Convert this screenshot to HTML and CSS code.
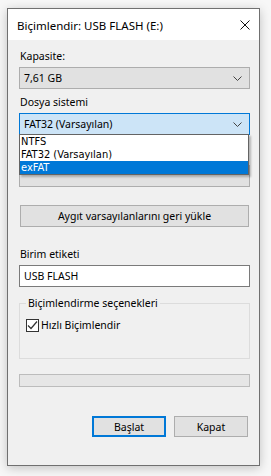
FILE: index.html
```html
<!DOCTYPE html>
<html lang="tr">
<head>
<meta charset="utf-8">
<title>Biçimlendir</title>
<link rel="stylesheet" href="styles.css">
</head>
<body>
<div class="window">
  <div class="titlebar">
    <span class="title">Biçimlendir: USB FLASH (E:)</span>
    <svg class="close" width="10" height="10" viewBox="0 0 10 10"><path d="M0.5 0.5 L9.5 9.5 M9.5 0.5 L0.5 9.5" stroke="#111" stroke-width="1"/></svg>
  </div>
  <div class="content">
    <div class="label first">Kapasite:</div>
    <div class="combo"><span>7,61 GB</span><svg class="chev" width="9" height="5" viewBox="0 0 9 5"><path d="M0.5 0.5 L4.5 4.5 L8.5 0.5" fill="none" stroke="#444" stroke-width="1"/></svg></div>
    <div class="label">Dosya sistemi</div>
    <div class="combo focused"><span>FAT32 (Varsayılan)</span><svg class="chev" width="9" height="5" viewBox="0 0 9 5"><path d="M0.5 0.5 L4.5 4.5 L8.5 0.5" fill="none" stroke="#444" stroke-width="1"/></svg>
      <ul class="list">
        <li>NTFS</li>
        <li>FAT32 (Varsayılan)</li>
        <li class="sel">exFAT</li>
      </ul>
    </div>
    <div class="combo hidden-combo"></div>
    <button class="restore">Aygıt varsayılanlarını geri yükle</button>
    <div class="label vol">Birim etiketi</div>
    <div class="input">USB FLASH</div>
    <fieldset class="group">
      <legend>Biçimlendirme seçenekleri</legend>
      <label class="check"><span class="box"><svg width="11" height="11" viewBox="0 0 11 11"><path d="M1 5.5 L4 8.5 L10 1.5" fill="none" stroke="#333" stroke-width="1.2"/></svg></span>Hızlı Biçimlendir</label>
    </fieldset>
    <div class="progress"></div>
    <div class="buttons">
      <button class="btn primary">Başlat</button>
      <button class="btn">Kapat</button>
    </div>
  </div>
</div>
</body>
</html>
```

FILE: styles.css
```css
html, body {
  margin: 0;
  padding: 0;
}
body {
  background: #f7f7f7;
  font-family: "Noto Sans", Lato, sans-serif;
  font-size: 10.5px;
  color: #000;
  width: 271px;
  height: 476px;
  overflow: hidden;
}
.window {
  margin: 8px 0 0 7px;
  width: 253px;
  height: 458px;
  box-sizing: border-box;
  border: 1px solid #707070;
  background: #f0f0f0;
  box-shadow: 0 2px 10px rgba(0,0,0,0.22);
  display: flex;
  flex-direction: column;
}
.titlebar {
  height: 31px;
  background: #fff;
  display: flex;
  align-items: center;
  padding: 0 9px 0 9px;
  flex: none;
}
.title {
  flex: 1;
  font-size: 11.5px;
  line-height: 31px;
  padding-top: 1px;
}
.close {
  display: block;
  margin-top: 1px;
}
.content {
  padding: 0 9px 0 11px;
  display: flex;
  flex-direction: column;
}
.label {
  line-height: 15px;
  height: 15px;
  margin-top: 6px;
  margin-bottom: 3px;
  padding-left: 1px;
}
.label.first {
  margin-top: 9px;
}
.combo {
  position: relative;
  height: 22px;
  box-sizing: border-box;
  border: 1px solid #adadad;
  background: #e1e1e1;
  display: flex;
  align-items: center;
  padding: 0 7px 0 4px;
}
.combo span {
  flex: 1;
}
.combo.focused {
  border-color: #0078d7;
  background: #cce4f7;
  z-index: 5;
}
.hidden-combo {
  margin-top: 30px;
}
.chev {
  display: block;
}
.list {
  position: absolute;
  left: -1px;
  top: 20px;
  width: 230px;
  box-sizing: border-box;
  margin: 0;
  padding: 0;
  list-style: none;
  background: #fff;
  border: 1px solid #646464;
  box-shadow: 2px 2px 2px rgba(0,0,0,0.25);
  font-family: "DejaVu Sans Condensed", "DejaVu Sans", sans-serif;
  font-stretch: condensed;
  font-size: 11px;
}
.list li {
  height: 13px;
  line-height: 13px;
  padding-left: 1px;
  overflow: hidden;
}
.list li.sel {
  background: #0078d7;
  color: #fff;
}
.restore {
  margin: 18px 1px 0 1px;
  height: 22px;
  box-sizing: border-box;
  border: 1px solid #adadad;
  background: #e1e1e1;
  font: inherit;
  color: #000;
  padding: 0;
}
.label.vol {
  margin-top: 20px;
}
.input {
  height: 22px;
  box-sizing: border-box;
  border: 1px solid #7a7a7a;
  background: #fff;
  line-height: 20px;
  padding-left: 4px;
}
.group {
  margin: 9px 0 0 0;
  padding: 7px 6px 0 6px;
  height: 63px;
  box-sizing: border-box;
  border: 1px solid #dcdcdc;
  min-width: 0;
}
.group legend {
  padding: 0 2px;
  margin-left: 0;
  line-height: 15px;
}
.check {
  display: flex;
  align-items: center;
  gap: 2px;
}
.box {
  width: 13px;
  height: 13px;
  box-sizing: border-box;
  border: 1px solid #333;
  background: #fff;
  display: flex;
  align-items: center;
  justify-content: center;
}
.box svg {
  display: block;
}
.progress {
  margin-top: 15px;
  height: 13px;
  box-sizing: border-box;
  border: 1px solid #bcbcbc;
  background: #e6e6e6;
}
.buttons {
  display: flex;
  justify-content: flex-end;
  gap: 8px;
  margin-top: 29px;
  padding-right: 2px;
}
.btn {
  width: 74px;
  height: 21px;
  box-sizing: border-box;
  border: 1px solid #adadad;
  background: #e1e1e1;
  font: inherit;
  color: #000;
  padding: 0;
}
.btn.primary {
  border: 2px solid #0078d7;
}
```
